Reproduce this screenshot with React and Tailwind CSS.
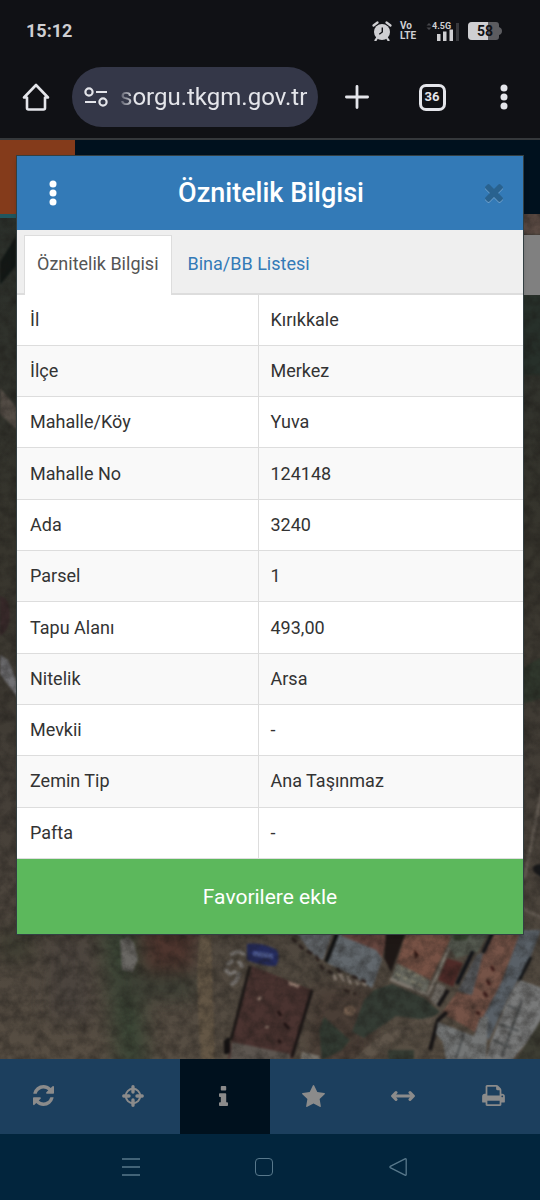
import { useState } from "react";

const rows = [
  ["İl", "Kırıkkale"],
  ["İlçe", "Merkez"],
  ["Mahalle/Köy", "Yuva"],
  ["Mahalle No", "124148"],
  ["Ada", "3240"],
  ["Parsel", "1"],
  ["Tapu Alanı", "493,00"],
  ["Nitelik", "Arsa"],
  ["Mevkii", "-"],
  ["Zemin Tip", "Ana Taşınmaz"],
  ["Pafta", "-"],
];

const tools = [
  { id: "refresh", label: "Yenile", icon: RefreshIcon },
  { id: "locate", label: "Konum", icon: CrosshairIcon },
  { id: "info", label: "Bilgi", icon: InfoIcon },
  { id: "favorites", label: "Favoriler", icon: StarIcon },
  { id: "measure", label: "Ölçüm", icon: MeasureIcon },
  { id: "print", label: "Yazdır", icon: PrintIcon },
];

function RefreshIcon() {
  return (
    <svg viewBox="0 0 1536 1536" className="w-[21px] h-[21px]" fill="currentColor">
      <path d="M1511 928q0 5-1 7-64 268-268 434.5t-478 166.5q-146 0-282.5-55t-243.5-157l-129 129q-19 19-45 19t-45-19-19-45v-448q0-26 19-45t45-19h448q26 0 45 19t19 45-19 45l-137 137q71 66 161 102t187 36q134 0 250-65t186-179q11-17 53-117 8-23 30-23h192q13 0 22.5 9.5t9.5 22.5zm25-800v448q0 26-19 45t-45 19h-448q-26 0-45-19t-19-45 19-45l138-138q-148-137-349-137-134 0-250 65t-186 179q-11 17-53 117-8 23-30 23h-199q-13 0-22.5-9.500t-9.500-22.500v-7q65-268 270-434.500t480-166.500q146 0 284 55.500t245 156.500l130-129q19-19 45-19t45 19 19 45z" />
    </svg>
  );
}

function CrosshairIcon() {
  return (
    <svg viewBox="0 0 22 22" className="w-[22px] h-[22px]" fill="none" stroke="currentColor">
      <circle cx="11" cy="11" r="7.2" strokeWidth="2" />
      <path d="M11 1.800V7M11 15v5.200M1.800 11H7M15 11h5.200" strokeWidth="3.400" strokeLinecap="round" />
    </svg>
  );
}

function InfoIcon() {
  return (
    <svg viewBox="0 128 640 1408" className="w-[9px] h-[20px]" fill="currentColor">
      <path d="M640 1344v128q0 26-19 45t-45 19h-512q-26 0-45-19t-19-45v-128q0-26 19-45t45-19h64v-384h-64q-26 0-45-19t-19-45v-128q0-26 19-45t45-19h384q26 0 45 19t19 45v576h64q26 0 45 19t19 45zm-128-1152v192q0 26-19 45t-45 19h-256q-26 0-45-19t-19-45v-192q0-26 19-45t45-19h256q26 0 45 19t19 45z" />
    </svg>
  );
}

function StarIcon() {
  return (
    <svg viewBox="0 32 1664 1588" className="w-[23px] h-[22px]" fill="currentColor">
      <path d="M1664 647q0 22-26 48l-363 354 86 500q1 7 1 20 0 21-10.5 35.5t-30.5 14.5q-19 0-40-12l-449-236-449 236q-22 12-40 12-21 0-31.500-14.500t-10.500-35.500q0-6 2-20l86-500-364-354q-25-27-25-48 0-37 56-46l502-73 225-455q19-41 49-41t49 41l225 455 502 73q56 9 56 46z" />
    </svg>
  );
}

function MeasureIcon() {
  return (
    <svg
      viewBox="0 0 24 12"
      className="w-[24px] h-[12px]"
      fill="none"
      stroke="currentColor"
      strokeWidth="3"
      strokeLinecap="round"
      strokeLinejoin="round"
    >
      <path d="M2.500 6h19M5 2.500 1.600 6 5 9.500M19 2.500 22.400 6 19 9.500" />
    </svg>
  );
}

function PrintIcon() {
  return (
    <svg viewBox="0 128 1664 1536" className="w-[23px] h-[21px]" fill="currentColor">
      <path d="M384 1536h896v-256h-896v256zm0-640h896v-384h-160q-40 0-68-28t-28-68v-160h-640v640zm1152 64q0-26-19-45t-45-19-45 19-19 45 19 45 45 19 45-19 19-45zm128 0v416q0 13-9.500 22.500t-22.500 9.500h-224v160q0 40-28 68t-68 28h-960q-40 0-68-28t-28-68v-160h-224q-13 0-22.500-9.500t-9.500-22.500v-416q0-79 56.500-135.500t135.500-56.500h64v-544q0-40 28-68t68-28h672q40 0 88 20t76 48l152 152q28 28 48 76t20 88v256h64q79 0 135.500 56.500t56.500 135.500z" />
    </svg>
  );
}

function CloseIcon() {
  return (
    <svg viewBox="110 366 1188 1188" className="w-[18px] h-[18px]" fill="currentColor">
      <path d="M1298 1322q0 40-28 68l-136 136q-28 28-68 28t-68-28l-294-294-294 294q-28 28-68 28t-68-28l-136-136q-28-28-28-68t28-68l294-294-294-294q-28-28-28-68t28-68l136-136q28-28 68-28t68 28l294 294 294-294q28-28 68-28t68 28l136 136q28 28 28 68t-28 68l-294 294 294 294q28 28 28 68z" />
    </svg>
  );
}

function DotsIcon() {
  return (
    <svg viewBox="0 0 8 26" className="w-[8px] h-[26px]" fill="currentColor">
      <circle cx="4" cy="4" r="3.500" />
      <circle cx="4" cy="13" r="3.500" />
      <circle cx="4" cy="22" r="3.500" />
    </svg>
  );
}

function StatusBar() {
  return (
    <div className="flex h-[62px] items-center justify-between pl-[26px] pr-[38px] text-[#cfcfd2]">
      <span className="text-[18px] font-bold leading-[24px]">15:12</span>
      <div className="flex items-center">
        {/* alarm */}
        <svg viewBox="0 0 20 20" className="mr-2 w-[20px] h-[20px]">
          <circle cx="10" cy="11" r="8" fill="currentColor" />
          <path d="M1.500 4.500 5.500 1.500M18.500 4.500 14.500 1.500M5 17l-1.500 2.300M15 17l1.500 2.300" stroke="currentColor" strokeWidth="2.200" strokeLinecap="round" />
          <path d="M10.300 6.500V11l-3 2.200" fill="none" stroke="#101115" strokeWidth="1.400" />
        </svg>
        <div className="mr-2 flex w-[18px] flex-col text-[10px] font-bold leading-[10px]">
          <span>Vo</span>
          <span>LTE</span>
        </div>
        {/* signal */}
        <svg viewBox="0 0 34 20" className="mr-2 w-[34px] h-[20px]">
          <path d="M.5 4.500 3 2l2.500 2.500zM.5 6.500 3 9l2.500-2.500z" fill="#46474b" />
          <text x="6" y="8" fontSize="9" fontWeight="700" fill="currentColor">4.5G</text>
          <path d="M11 13h3.500v7H11zM17 10.500h3.500V20H17zM23.500 8.500H27V20h-3.500z" fill="currentColor" />
          <path d="M30 2h3v18h-3z" fill="#37383c" />
        </svg>
        {/* battery */}
        <svg viewBox="0 0 34 18" className="w-[34px] h-[18px]">
          <path d="M4 0h24q3 0 3 3v2q3 1 3 4t-3 4v2q0 3-3 3H4q-4 0-4-4V4q0-4 4-4z" fill="#5c5c60" />
          <path d="M4 0h16v18H4q-4 0-4-4V4q0-4 4-4z" fill="currentColor" />
          <text x="17" y="14" textAnchor="middle" fontSize="14" fontWeight="700" fill="#101115">58</text>
        </svg>
      </div>
    </div>
  );
}

function BrowserBar() {
  return (
    <div className="flex h-[78px] items-start border-b-2 border-[#35383b] pt-[5px] text-[#e4e5ea]">
      <button aria-label="Ana sayfa" className="flex h-[60px] w-[72px] items-center justify-center">
        <svg viewBox="0 0 28 28" className="w-[28px] h-[28px]" fill="none" stroke="currentColor" strokeWidth="2.600" strokeLinejoin="round" strokeLinecap="round">
          <path d="M2 14.500h3V25q0 1.500 1.500 1.500h15Q23 26.500 23 25V14.500h3L14 2z" />
        </svg>
      </button>

      <div className="flex h-[60px] min-w-0 flex-1 items-center gap-3 rounded-full bg-[#343748] pl-3 pr-2">
        <svg viewBox="0 0 24 20" className="w-[24px] h-[20px] shrink-0" fill="none" stroke="currentColor" strokeWidth="2.200">
          <circle cx="5" cy="5" r="3.600" />
          <circle cx="19" cy="15" r="3.600" />
          <path d="M12 5h11M1 15h11" />
        </svg>
        <input
          aria-label="Adres"
          readOnly
          value="sorgu.tkgm.gov.tr"
          className="w-full min-w-0 bg-transparent text-[24px] leading-[32px] outline-none [mask-image:linear-gradient(to_right,rgba(0,0,0,0.2),#000_14px)]"
        />
      </div>

      <button aria-label="Yeni sekme" className="flex h-[60px] w-[78px] items-center justify-center">
        <svg viewBox="0 0 24 24" className="w-[24px] h-[24px]" stroke="currentColor" strokeWidth="2.800" strokeLinecap="round">
          <path d="M12 1.400v21.200M1.400 12h21.200" />
        </svg>
      </button>
      <button aria-label="Sekmeler" className="flex h-[60px] w-[72px] items-center justify-center">
        <span className="flex h-[27px] w-[27px] items-center justify-center rounded-[7px] border-[3px] border-current text-[13px] font-bold leading-[16px]">
          36
        </span>
      </button>
      <button aria-label="Menü" className="flex h-[60px] w-[72px] items-center justify-center">
        <DotsIcon />
      </button>
    </div>
  );
}

// dimmed aerial photo behind the dialog
function AerialMap() {
  return (
    <svg viewBox="0 214 540 845" preserveAspectRatio="xMidYMax slice" className="min-h-0 w-full flex-1 bg-[#443d35]" aria-hidden="true">
      <defs>
        <linearGradient id="ground" x1="0" y1="0" x2="0" y2="1">
          <stop offset="0" stopColor="#2b302b" />
          <stop offset="0.4" stopColor="#37352d" />
          <stop offset="0.7" stopColor="#453f38" />
          <stop offset="1" stopColor="#574e43" />
        </linearGradient>
        <filter id="soft" colorInterpolationFilters="sRGB">
          <feGaussianBlur stdDeviation="9" />
        </filter>
        <filter id="edge" colorInterpolationFilters="sRGB">
          <feGaussianBlur stdDeviation="0.9" />
        </filter>
        <filter id="grain" x="0" y="0" width="100%" height="100%" colorInterpolationFilters="sRGB">
          <feTurbulence type="fractalNoise" baseFrequency="0.09" numOctaves="5" seed="7" />
          <feColorMatrix values="0 0 0 0 0.1  0 0 0 0 0.09  0 0 0 0 0.08  1.200 0 0 0 -0.400" />
        </filter>
      </defs>
      <rect y="214" width="540" height="845" fill="url(#ground)" />

      {/* field */}
      <g filter="url(#soft)">
        <path d="M100 925h36l12 144h-30z" fill="#3a4535" />
        <path d="M140 920h58l-8 60-44 4z" fill="#4e352e" />
        <path d="M120 972h75v26h-75z" fill="#3c3f34" />
        <path d="M50 940h40v80H50z" fill="#4b443e" />
        <path d="M312 985h60v80h-66z" fill="#4a3e36" />
        <path d="M0 930h30v30H0z" fill="#3c3c30" />
      </g>

      <g filter="url(#edge)">
        {/* left strip */}
        <path d="M0 262 16 236v30L0 285z" fill="#111715" />
        <path d="M0 388 17 408v22L0 414z" fill="#544d46" />
        <path d="M0 596q10 2 10 18T0 636z" fill="#38292a" />
        <path d="M0 655 8 660 18 684v14L0 674z" fill="#727275" />

        {/* right strip */}
        <path d="M522 210h20v25h-20z" fill="#5a4a43" />
        <path d="M522 295h20v80h-20z" fill="#27302a" />
        <path d="M522 670q14-12 20-12v40l-20 6z" fill="#30382d" />
        <path d="M524 880 542 790M522 908l20 10" stroke="#625a52" strokeWidth="3" />
        <path d="M534 872q-4-8 8-8v14z" fill="#17181a" />

        {/* path and rubble */}
        <path d="M200 930h11l4 132h-13q-8-70-2-132z" fill="#635645" />
        <path d="M120 940l8-3 6 6 4 16-5 13-11-2z" fill="#6a6864" />
        <path
          d="M228 964l4-3M232 954l5-2M230 974l5-2M239 962l3 4M232 984l4-3M240 952l4 2M226 970l2 2M239 974l-2 5"
          stroke="#77736f"
          strokeWidth="4"
          strokeLinecap="round"
        />

        {/* houses */}
        <path d="M247 944q14-2 30 6 4 8-1 16-14 0-29-6z" fill="#242b5c" />
        <path d="M253 951l20 3v5l-20-3z" fill="#4b588f" />
        <path d="M252 966 312 990 293 1059H228l3-17z" fill="#4a3330" />
        <path d="M250 966 231 1040" stroke="#1c1716" strokeWidth="3" />
        <path d="M228 1038v15M226 1040v14" stroke="#131011" strokeWidth="4" />
        <path d="M312 990 292 1057" stroke="#1a1515" strokeWidth="3" />
        <path d="M232 1042l58 12v6h-60z" fill="#5d5650" />
        <path d="M288 981l12 4-2 3-9-3zM257 998l4-2 1 3-4 2zM265 1026h4v2h-4z" fill="#917a6e" />
        <path d="M278 1011l3 5M284 1023l5 6M278 1040l3 3" stroke="#1f1313" strokeWidth="3" />
        <path d="M302 1052l18 4v6h-20z" fill="#77726a" />

        {/* lawn and track */}
        <path d="M324 1017 350 1040l-8 10-20 10-3-30z" fill="#323b32" />
        <path d="M364 1000 374 990 392 984 424 998 440 1012 428 1020 396 1016 364 1038 352 1032z" fill="#343c34" />
        <path d="M352 1062q32-38 84-46l2 4-34 13-38 29z" fill="#5f554a" />
        <path d="M344 1008q8-6 12 2l-4 6-8-2z" fill="#7c6554" />
        <path d="M388 1050h26v12h-26z" fill="#363c33" />

        {/* roofs */}
        <path d="M295 930h38l-10 30-12-7z" fill="#63676b" />
        <path d="M340 930 376 945 382 960 372 988 350 974 327 963z" fill="#62686d" />
        <path d="M342 930h48l-8 28-6-8-34-14z" fill="#66463f" />
        <path d="M337 934 326 962" stroke="#121314" strokeWidth="4" />
        <path d="M386 930h21l-16 42-7-14z" fill="#1f1816" />
        <path d="M407 930h42l1 10-20 41-34-17z" fill="#775245" />
        <path d="M397 963 430 980l-4 14-35-15z" fill="#66675e" />
        <path
          d="M400 967l26 13M396 974l26 12"
          stroke="#7f7d6d"
          strokeWidth="3"
          strokeDasharray="5 3"
        />
        <path d="M450 946 428 995 390 979" fill="none" stroke="#7d776e" strokeWidth="3" />
        <path d="M414 949l5 6-4 4z" fill="#321713" />
        <path d="M447 958l16 5-10 24-15-7z" fill="#4f2b28" />
        <path d="M448 946l4-12h36l-10 18-22 6z" fill="#555a50" />
        <path d="M452 932h20l-6 8h-12z" fill="#36422f" />
        <path d="M473 951 457 984" stroke="#121419" strokeWidth="4" />
        <path d="M477 954l15-2-14 40-8 4-12-6z" fill="#55575a" />
        <path d="M493 930h30l-16 36-14 42-18 24-33-19 15-21 15 3 12-44z" fill="#755347" />
        <path d="M493 932 483 953" stroke="#15161a" strokeWidth="4" />
        <path d="M521 930h20l-10 26-24 44-18 40-11-13 25-48z" fill="#596067" />
        <path d="M531 957 519 981" stroke="#14171a" strokeWidth="3" />
        <path d="M437 983 446 987 438 1007 430 1000z" fill="#726d66" />
        <path d="M448 990 438 1006M447 1012 438 1020 430 1050" fill="none" stroke="#171516" strokeWidth="4" />
        <path d="M438 1022 474 1036 480 1018 488 1016 486 1060h-40l-3-18-7-8z" fill="#747676" />
        <path d="M520 980 542 988v36l-30 36h-26l4-16 20-50z" fill="#787979" />
        <path
          d="M507 1005l14 6M499 1024l20 7M493 1040l18 8M522 1000l-20 56M464 1034l-8 24"
          stroke="#4d5051"
          strokeWidth="2"
        />
        <path d="M542 1018v42h-26z" fill="#3d3d33" />

        {/* loose stones and shade */}
        <path
          d="M332 972l4 8M339 972l5 9M347 976l4 8M355 980l4 5M362 982l4 4"
          stroke="#82786e"
          strokeWidth="3"
        />
        <path
          d="M292 938l10 10 14 8 6 12 12 6M337 968l6 8M352 976l14 6M344 990l12 4"
          fill="none"
          stroke="#2a201d"
          strokeWidth="3"
          strokeDasharray="6 4"
        />
        <path d="M491 966l3 5M487 980l3 5M484 992l3 5M476 1012l4 2" stroke="#3a1b18" strokeWidth="3" />
      </g>

      <rect y="214" width="540" height="845" filter="url(#grain)" opacity="0.7" />
      <path d="M523 235h17v60h-17z" fill="#808080" />
    </svg>
  );
}

function DetailDialog() {
  const [tab, setTab] = useState("detail");

  return (
    <section role="dialog" aria-label="Öznitelik Bilgisi" className="relative mx-4 mb-[124px] mt-[15px] border border-[#333f42] bg-white text-[#333333] shadow-md">
      <header className="flex h-[74px] items-center justify-between bg-[#337ab7] pl-8 pr-5">
        <button aria-label="Seçenekler" className="text-white">
          <DotsIcon />
        </button>
        <h1 className="text-[27px] font-medium leading-[32px] text-white">Öznitelik Bilgisi</h1>
        <button aria-label="Kapat" className="text-[#29628f] drop-shadow-[0_1px_0_#6fa0cb]">
          <CloseIcon />
        </button>
      </header>

      <div role="tablist" className="flex h-[65px] items-end border-b-2 border-[#dddddd] bg-[#efefef] pl-[7px] text-[18px] leading-[24px]">
        <button
          role="tab"
          aria-selected={tab === "detail"}
          onClick={() => setTab("detail")}
          className="-mb-[2px] h-[60px] border border-b-0 border-[#dddddd] bg-white px-3 pb-1 text-[#555555]"
        >
          Öznitelik Bilgisi
        </button>
        <button
          role="tab"
          aria-selected={tab === "building"}
          onClick={() => setTab("building")}
          className="h-[58px] px-4 text-[#337ab7]"
        >
          Bina/BB Listesi
        </button>
      </div>

      <table className="h-[564px] w-full table-fixed border-collapse text-[18px] leading-[24px]">
        <tbody>
          {rows.map(([name, value]) => (
            <tr key={name} className="border-b border-[#dddddd] odd:bg-white even:bg-[#f9f9f9]">
              <th scope="row" className="w-[241px] border-r border-[#dddddd] px-[13px] text-left font-normal">
                {name}
              </th>
              <td className="px-3">{value}</td>
            </tr>
          ))}
        </tbody>
      </table>

      <button className="block h-[75px] w-full bg-[#5cb85c] text-[21px] leading-[28px] text-white">
        Favorilere ekle
      </button>
    </section>
  );
}

function App() {
  const [active, setActive] = useState("info");

  return (
    <div className="flex min-h-screen flex-col bg-[#101115] font-[Roboto,sans-serif]">
      <StatusBar />
      <BrowserBar />

      <main className="relative flex-1">
        {/* page under the dialog */}
        <div className="absolute inset-0 flex flex-col">
          <div className="relative z-10 h-[74px] shrink-0 bg-[#00111e]">
            <div className="box-content h-full w-[75px] border-b-4 border-[#20565f] bg-[#843b1b]" />
          </div>
          <AerialMap />
        </div>
        <div className="relative z-20">
          <DetailDialog />
        </div>
      </main>

      <nav className="grid h-[75px] grid-cols-6 bg-[#1c3f5e]">
        {tools.map((tool) => (
          <button
            key={tool.id}
            aria-label={tool.label}
            onClick={() => setActive(tool.id)}
            className={`flex items-center justify-center pb-[2px] pr-1 text-[#8b8b8b] ${
              active === tool.id ? "bg-[#00111e]" : ""
            }`}
          >
            <tool.icon />
          </button>
        ))}
      </nav>

      {/* system navigation */}
      <div className="grid h-[66px] grid-cols-3 bg-[#02253d] pl-16 pr-[75px] text-[#58788b]">
        <button aria-label="Son uygulamalar" className="flex items-center justify-center">
          <svg viewBox="0 0 18 18" className="w-[18px] h-[18px]" stroke="currentColor" strokeWidth="1.500">
            <path d="M0 1h18M0 9h18M0 17h18" />
          </svg>
        </button>
        <button aria-label="Ana ekran" className="flex items-center justify-center">
          <span className="h-[18px] w-[18px] rounded-[4px] border border-current" />
        </button>
        <button aria-label="Geri" className="flex items-center justify-center">
          <svg viewBox="0 0 18 18" className="w-[18px] h-[18px]" fill="none" stroke="currentColor" strokeWidth="1.300" strokeLinejoin="round">
            <path d="M16 .8q1.200-.3 1.200.8v14.800q0 1.100-1.200.8L1.200 9.600q-.7-.6 0-1.200z" />
          </svg>
        </button>
      </div>
    </div>
  );
}

export default App;
